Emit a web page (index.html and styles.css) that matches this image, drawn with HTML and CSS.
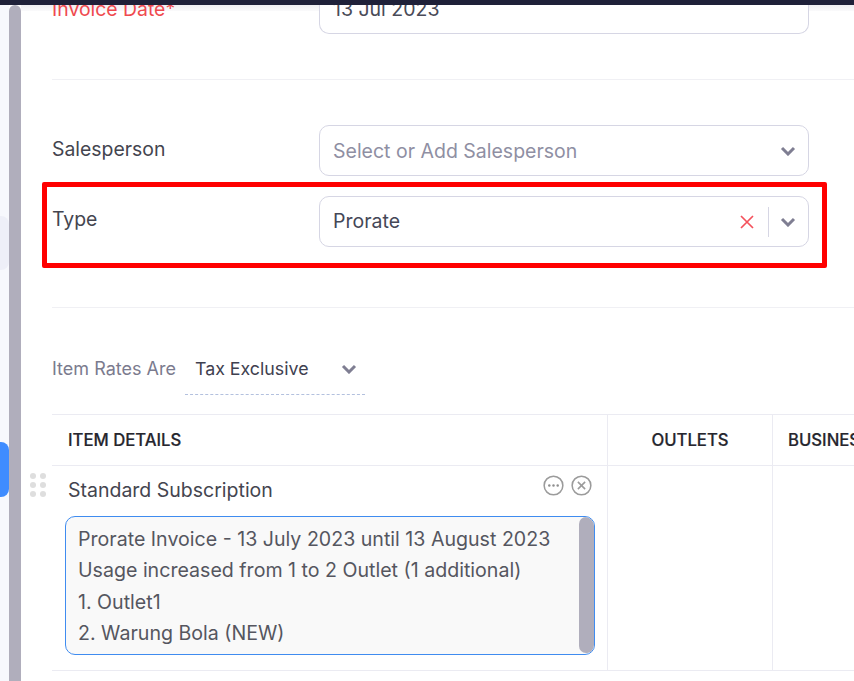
FILE: index.html
```html
<!DOCTYPE html>
<html lang="en">
<head>
<meta charset="utf-8">
<title>Invoice</title>
<link rel="stylesheet" href="styles.css">
</head>
<body>
<div class="topbar"></div>
<div class="shell">
  <aside class="rail">
    <div class="rail-blob"></div>
    <div class="rail-tab"></div>
  </aside>
  <div class="page-scroll"></div>
  <main class="main">
    <div class="top-shadow"></div>
    <section class="form-row row-date">
      <label class="label label-req">Invoice Date*</label>
      <div class="input input-date">13 Jul 2023</div>
    </section>
    <hr class="divider divider-a">
    <section class="form-row row-sales">
      <label class="label">Salesperson</label>
      <div class="input">
        <span class="placeholder">Select or Add Salesperson</span>
        <svg class="chev" viewBox="0 0 16 10"><path d="M2 2l6 6 6-6"/></svg>
      </div>
    </section>
    <section class="form-row row-type">
      <label class="label label-type">Type</label>
      <div class="input">
        <span class="value">Prorate</span>
        <svg class="clear" viewBox="0 0 14 14"><path d="M1 1l12 12M13 1L1 13"/></svg>
        <span class="sep"></span>
        <svg class="chev chev-type" viewBox="0 0 16 10"><path d="M2 2l6 6 6-6"/></svg>
      </div>
    </section>
    <hr class="divider divider-b">
    <section class="rates">
      <span class="rates-label">Item Rates Are</span>
      <div class="rates-select">
        <span>Tax Exclusive</span>
        <svg class="chev" viewBox="0 0 16 10"><path d="M2 2l6 6 6-6"/></svg>
      </div>
    </section>
    <section class="table">
      <div class="cell head c1">ITEM DETAILS</div>
      <div class="cell head c2">OUTLETS</div>
      <div class="cell head c3">BUSINESS</div>
      <div class="cell body c1 item">
        <div class="drag"><i></i><i></i><i></i><i></i><i></i><i></i></div>
        <div class="item-top">
          <span class="item-name">Standard Subscription</span>
          <div class="item-actions">
            <svg class="act" viewBox="0 0 22 22"><circle cx="11" cy="11" r="9.8"/><circle class="dot" cx="6.6" cy="11" r="1.3"/><circle class="dot" cx="11" cy="11" r="1.3"/><circle class="dot" cx="15.4" cy="11" r="1.3"/></svg>
            <svg class="act" viewBox="0 0 22 22"><circle cx="11" cy="11" r="9.8"/><path d="M7.2 7.2l7.6 7.6M14.8 7.2l-7.6 7.6"/></svg>
          </div>
        </div>
        <div class="desc">
          <div class="desc-text">Prorate Invoice - 13 July 2023 until 13 August 2023<br>Usage increased from 1 to 2 Outlet (1 additional)<br>1. Outlet1<br>2. Warung Bola (NEW)</div>
          <div class="desc-thumb"></div>
        </div>
      </div>
      <div class="cell body c2"></div>
      <div class="cell body c3"></div>
    </section>
    <div class="highlight"></div>
  </main>
</div>
</body>
</html>
```
FILE: styles.css
```css
* { box-sizing: border-box; }
html, body { margin: 0; height: 681px; overflow: hidden; background: #fff; }
body { font-family: Inter, "Liberation Sans", sans-serif; color: #3b3d4d; position: relative; }

.topbar { height: 5px; background: #1f2139; position: relative; z-index: 3; }
.shell { display: flex; height: 676px; }

.rail { width: 9px; background: #f7f8fd; position: relative; flex: none; }
.rail-blob { position: absolute; top: 211px; left: 0; width: 9px; height: 54px; background: #eeeff8; border-radius: 0 8px 8px 0; }
.rail-tab { position: absolute; top: 437px; left: 0; width: 9px; height: 55px; background: #3f8cff; border-radius: 0 8px 8px 0; }
.page-scroll { width: 12px; flex: none; background: #b0aebc; border-radius: 6px 6px 0 0; }

.main { flex: 1; min-width: 0; padding-left: 31px; position: relative; overflow: hidden; }
.top-shadow { position: absolute; top: 0; left: 0; right: 0; height: 6px; background: linear-gradient(#efeff2, #fafafb); }

.form-row { display: flex; align-items: flex-start; }
.label { width: 267px; flex: none; font-size: 19.4px; line-height: 24px; color: #44454f; }
.label-req { color: #ef4a4f; margin-top: -8px; }
.label-type { margin-top: 11px; }
.row-sales .label { margin-top: 12px; }

.input { width: 490px; height: 51px; flex: none; display: flex; align-items: center; padding: 0 12px 0 13px; border: 1px solid #d6d6e4; border-radius: 10px; background: #fff; font-size: 19.5px; position: relative; color: #4a4b58; }
.input-date { height: 39px; margin-top: -10px; border-top: 0; border-radius: 0 0 10px 10px; align-items: flex-end; padding-bottom: 12px; line-height: 24px; }
.row-date { height: 29px; position: relative; }
.placeholder { color: #8f8fa3; flex: 1; }
.value { color: #454757; flex: 1; margin-top: -1px; }

.chev { width: 16px; height: 10px; flex: none; fill: none; stroke: #7f7e92; stroke-width: 3; }
.clear { width: 14px; height: 14px; flex: none; fill: none; stroke: #f4525c; stroke-width: 1.7; margin: 1px 14px 0 0; }
.sep { width: 1px; height: 30px; background: #d6d6e4; flex: none; margin-right: 11px; }

.divider { border: 0; height: 1px; background: #f0f0f4; margin: 0; }
.divider-a { margin-top: 45px; margin-bottom: 45px; }
.row-type { margin-top: 20px; }
.divider-b { margin-top: 60px; }

.rates { display: flex; align-items: flex-start; height: 106px; padding-top: 50px; }
.rates-label { font-size: 18px; line-height: 22px; color: #7b7b8e; width: 133px; flex: none; }
.rates-select { width: 180px; height: 37px; padding: 0 8px 14px 10px; display: flex; align-items: center; justify-content: space-between; border-bottom: 1px dashed #b3c0de; font-size: 17.8px; line-height: 22px; color: #3f4150; }

.table { display: grid; grid-template-columns: 555px 165px 1fr; grid-template-rows: 51px 204px; width: 802px; border-top: 1px solid #ebebf2; border-bottom: 1px solid #ebebf2; }
.cell { border-left: 1px solid #ebebf2; }
.cell.c1 { border-left: 0; }
.head { display: flex; align-items: center; font-size: 16.7px; font-weight: 500; color: #26262e; border-bottom: 1px solid #ebebf2; white-space: nowrap; overflow: hidden; -webkit-text-stroke: 0.2px #26262e; }
.head.c1 { padding-left: 16px; }
.head.c2 { justify-content: center; }
.head.c3 { padding-left: 15px; }

.item { position: relative; padding: 0 12px 0 13px; }
.drag { position: absolute; left: -22px; top: 7px; display: grid; grid-template-columns: 6px 6px; gap: 3px 4px; }
.drag i { width: 6px; height: 6px; border-radius: 50%; background: #dedede; }
.item-top { display: flex; align-items: flex-start; justify-content: space-between; height: 50px; padding: 9px 3px 0 3px; }
.item-name { font-size: 19.5px; line-height: 30px; color: #44454f; }
.item-actions { display: flex; gap: 7px; }
.act { width: 21px; height: 21px; fill: none; stroke: #9b9b9b; stroke-width: 1.6; }
.act .dot { fill: #8f8f8f; stroke: none; }

.desc { width: 530px; height: 139px; border: 1px solid #3f8cf0; border-radius: 10px; background: #f9f9f9; position: relative; padding: 7px 12px; overflow: hidden; }
.desc-text { font-size: 19.6px; line-height: 31.4px; color: #55565f; white-space: nowrap; }
.desc-thumb { position: absolute; top: 0; right: 0; bottom: 1px; width: 15px; background: #b0aebc; border-radius: 7px; }

.highlight { position: absolute; left: 21px; top: 177px; width: 785px; height: 86px; border: 5px solid #ff0000; border-radius: 2px; pointer-events: none; }
```
